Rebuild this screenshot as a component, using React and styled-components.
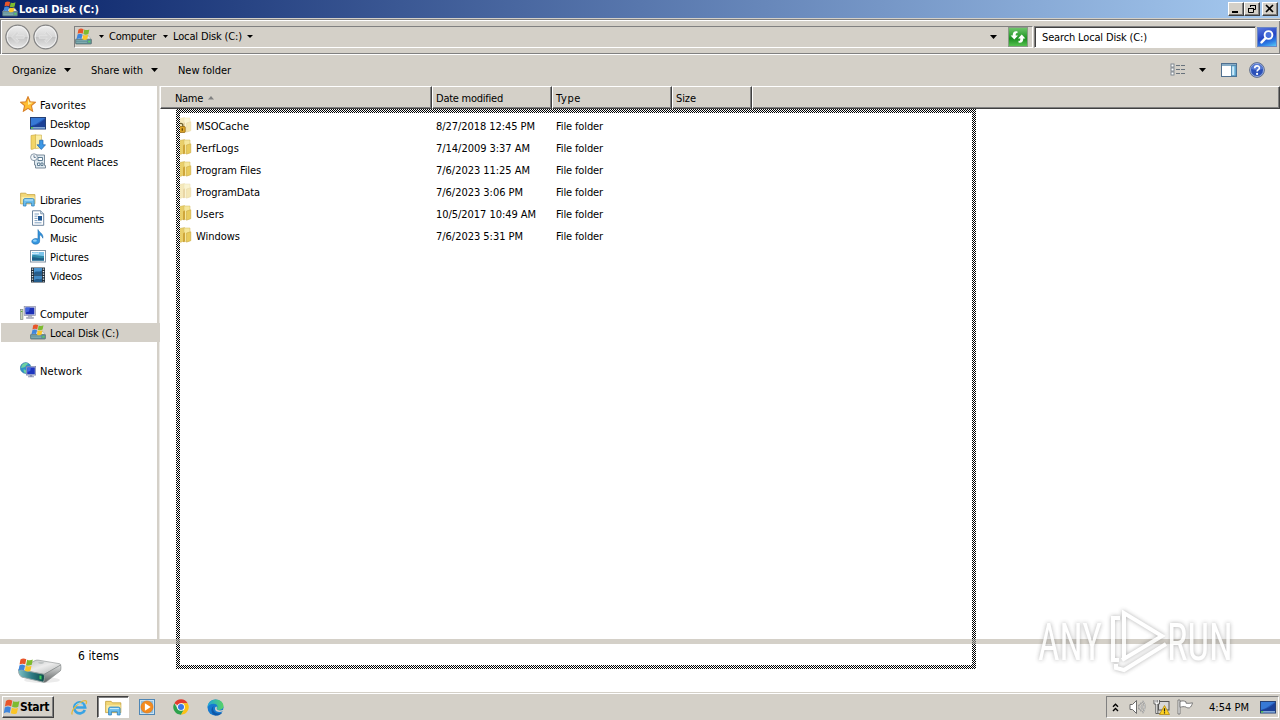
import React, { useLayoutEffect, useRef } from 'react';
import styled, { createGlobalStyle, css } from 'styled-components';

const FACE = '#d4d0c8';

const GlobalStyle = createGlobalStyle`
  html, body { margin: 0; padding: 0; background: #fff; overflow: hidden; }
  body {
    font-family: 'DejaVu Sans Condensed', 'DejaVu Sans', sans-serif;
    font-stretch: condensed;
    font-size: 11px;
    color: #000;
  }
  svg { display: block; flex: none; }
`;

/* ---------- text ---------- */
const Label = styled.span`
  display: inline-block;
  white-space: pre;
  flex: none;
  line-height: 14px;
  font-size: ${(p) => p.$size || 11}px;
  font-weight: ${(p) => (p.$bold ? 700 : 400)};
  color: ${(p) => p.$color || '#000'};
`;

/* Tracks the text so that it takes exactly the given width. */
function Text({ w, children, ...rest }) {
  const ref = useRef(null);
  useLayoutEffect(() => {
    const el = ref.current;
    el.style.letterSpacing = '0px';
    el.style.width = 'auto';
    const natural = el.getBoundingClientRect().width;
    el.style.letterSpacing = `${(w - natural) / el.textContent.length}px`;
    el.style.width = `${w}px`;
  }, [w, children]);
  return <Label ref={ref} {...rest}>{children}</Label>;
}

/* ---------- window ---------- */
const Screen = styled.div`
  position: relative;
  width: 1280px;
  height: 720px;
  display: flex;
  flex-direction: column;
  overflow: hidden;
  background: #fff;
`;

const TitleBar = styled.header`
  height: 18px;
  flex: none;
  display: flex;
  align-items: center;
  padding: 0 2px;
  gap: 1px;
  background: linear-gradient(90deg, #0a246a, #a6caf0);

  & > ${Label} { margin-top: 2px; }
`;

const CaptionButtons = styled.div`
  margin-left: auto;
  display: flex;
  align-items: center;
`;

const CaptionButton = styled.div`
  box-sizing: border-box;
  width: 16px;
  height: 14px;
  margin-left: ${(p) => (p.$gap ? 2 : 0)}px;
  display: flex;
  align-items: center;
  justify-content: center;
  background: ${FACE};
  border: 1px solid;
  border-color: #fff #404040 #404040 #fff;
  box-shadow: inset -1px -1px #808080;
`;

const AddressRow = styled.div`
  box-sizing: border-box;
  height: 37px;
  flex: none;
  display: flex;
  align-items: center;
  padding: 0 1px 0 5px;
  background: ${FACE};
  border-top: 1px solid #d4d0c8;
  border-bottom: 1px solid #fff;
  box-shadow: inset 0 1px #808080, inset 1px 0 #808080, inset 0 2px #fff, inset 2px 0 #fff,
    inset -1px 0 #808080, inset 0 -1px #808080;
`;

const AddressBox = styled.div`
  box-sizing: border-box;
  width: 959px;
  height: 22px;
  margin-left: 15px;
  display: flex;
  align-items: center;
  border: 1px solid;
  border-color: #808080 #fff #fff #808080;
`;

const Spacer = styled.span`
  flex: ${(p) => (p.$w ? `0 0 ${p.$w}px` : '1')};
`;

const RefreshButton = styled.div`
  box-sizing: border-box;
  width: 20px;
  height: 20px;
  border: 1px solid #8a9a86;
  background: linear-gradient(#6ec56a, #279a2b 50%, #1d8f22 60%, #55c24f);
  display: flex;
  align-items: center;
  justify-content: center;
`;

const SearchBox = styled.div`
  box-sizing: border-box;
  width: 222px;
  height: 22px;
  margin-left: 1px;
  padding-left: 7px;
  display: flex;
  align-items: center;
  background: #fff;
  border: 1px solid;
  border-color: #808080 #d4d0c8 #fff #808080;
  box-shadow: inset 1px 1px #404040;

  & > ${Label} { margin-top: 2px; }
`;

const SearchButton = styled.div`
  box-sizing: border-box;
  width: 20px;
  height: 20px;
  margin-left: 1px;
  display: flex;
  align-items: center;
  justify-content: center;
  border: 1px solid #6b86c4;
  background: linear-gradient(160deg, #5a78dc, #2444c4 50%, #2b7ae4 75%, #59c8f4);
`;

const CommandBar = styled.div`
  box-sizing: border-box;
  height: 31px;
  flex: none;
  display: flex;
  align-items: center;
  padding: 0 15px 1px 12px;
  background: ${FACE};

  & > ${Label} { margin-top: 2px; }
`;

const Body = styled.main`
  height: 553px;
  flex: none;
  display: flex;
`;

const NavPane = styled.nav`
  box-sizing: border-box;
  width: 160px;
  flex: none;
  padding-top: 9px;
  background: linear-gradient(90deg, #fff 157px, #d4d0c8 157px, #d4d0c8 159px, #eceae6 159px);
`;

const NavRow = styled.div`
  height: 19px;
  margin-left: 1px;
  padding-left: ${(p) => (p.$child ? 29 : 19)}px;
  display: flex;
  align-items: center;
  gap: 4px;
  ${(p) => p.$selected && css`background: ${FACE};`}

  & > svg { margin-bottom: 2px; }
  & > ${Label} { margin-top: 2px; }
`;

const FilePane = styled.section`
  flex: 1;
  display: flex;
  flex-direction: column;
`;

const HeaderRow = styled.div`
  display: flex;
  height: 23px;
  flex: none;
  background: ${FACE};
`;

const HeaderCell = styled.div`
  box-sizing: border-box;
  width: ${(p) => (p.$w ? `${p.$w}px` : 'auto')};
  flex: ${(p) => (p.$w ? 'none' : '1')};
  height: 23px;
  padding-left: ${(p) => p.$pad || 3}px;
  padding-top: 2px;
  display: flex;
  align-items: center;
  gap: 5px;
  border: 1px solid;
  border-color: #fff #404040 #404040 #fff;
  box-shadow: inset -1px -1px #808080;

  & > svg { margin-bottom: 2px; }
`;

const FileList = styled.div`
  padding-top: 6px;
`;

const FileRow = styled.div`
  height: 22px;
  display: flex;
  align-items: center;
  padding-left: 16px;

  ${Label} { margin-top: 2px; }
`;

const NameCell = styled.div`
  width: 260px;
  display: flex;
  align-items: center;
  gap: 4px;

  & > svg { margin-bottom: 2px; }
`;

const DateCell = styled.div`
  width: 120px;
`;

const Splitter = styled.div`
  height: 5px;
  flex: none;
  background: ${FACE};
`;

const Details = styled.footer`
  height: 48px;
  flex: none;
  display: flex;
  align-items: flex-start;
  padding-left: 17px;
`;

const DetailsText = styled.div`
  padding: 5px 0 0 15px;
`;

const DriveSlot = styled.div`
  padding-top: 9px;
`;

/* Halftone outline that floats above the window while it is being dragged;
   it loses contrast where it crosses the splitter. */
const DragFrame = styled.div`
  position: absolute;
  left: 176px;
  top: 109px;
  width: 800px;
  height: 560px;
  background:
    linear-gradient(rgba(160, 158, 150, 0.6), rgba(160, 158, 150, 0.6)) 0 530px / 100% 5px no-repeat,
    repeating-conic-gradient(#000 0 25%, #fff 0 50%) 0 0 / 2px 2px;
  clip-path: polygon(evenodd, 0 0, 100% 0, 100% 100%, 0 100%, 0 0,
    4px 4px, 4px calc(100% - 4px), calc(100% - 4px) calc(100% - 4px), calc(100% - 4px) 4px, 4px 4px);
`;

const Watermark = styled.svg`
  position: absolute;
  left: 1030px;
  top: 602px;
  overflow: visible;
  opacity: 0.85;
  filter: drop-shadow(0 0 2px rgba(70, 70, 70, 0.5));
`;

/* ---------- taskbar ---------- */
const Taskbar = styled.div`
  box-sizing: border-box;
  height: 28px;
  flex: none;
  display: flex;
  align-items: center;
  padding: 2px 1px 0 2px;
  background: ${FACE};
  box-shadow: inset 0 1px #d4d0c8, inset 0 2px #fff;
`;

const StartButton = styled.div`
  box-sizing: border-box;
  width: 52px;
  height: 22px;
  display: flex;
  align-items: center;
  border: 1px solid;
  border-color: #fff #404040 #404040 #fff;
  box-shadow: inset -1px -1px #808080;
`;

const TaskItem = styled.div`
  box-sizing: border-box;
  width: 32px;
  height: 22px;
  margin-right: 2px;
  display: flex;
  align-items: center;
  justify-content: center;
  ${(p) =>
    p.$active &&
    css`
      background: #fff;
      border: 1px solid;
      border-color: #404040 #fff #fff #404040;
      box-shadow: inset 1px 1px #808080;
    `}
`;

const Tray = styled.div`
  box-sizing: border-box;
  width: 173px;
  height: 22px;
  margin-left: auto;
  padding: 0 2px 0 5px;
  display: flex;
  align-items: center;
  border: 1px solid;
  border-color: #808080 #fff #fff #808080;

  & > ${Label} { margin-top: 2px; }
`;

/* ---------- icons ---------- */
const Flag = ({ x = 0, y = 0, s = 1 }) => (
  <g transform={`translate(${x} ${y}) scale(${s})`}>
    <path d="M1.5 1.2C3 0 4.6.2 6 1L5.2 5C3.8 4.2 2.4 4.2.8 5z" fill="#e8562a" />
    <path d="M6.6 1.3C8 2 9.6 2 11 1.2L10.2 5.2C8.6 6 7.2 6 5.8 5.3z" fill="#7dbb2f" />
    <path d="M.7 5.7C2.2 4.8 3.6 4.9 5 5.7L4.2 9.6C2.8 8.9 1.4 8.9 0 9.8z" fill="#3f86dc" />
    <path d="M5.7 6C7.1 6.7 8.6 6.7 10 5.9L9.2 9.8C7.8 10.7 6.3 10.5 4.9 9.9z" fill="#fbc526" />
  </g>
);

const DiskIcon = ({ size = 16 }) => (
  <svg width={size} height={size} viewBox="0 0 16 16">
    <path d="M.5 11L3 7.5h10l2.500 3.500z" fill="#e4e7e6" stroke="#9a9f9f" strokeWidth=".5" />
    <rect x=".5" y="10.5" width="15" height="4.6" rx=".8" fill="#5f8f98" stroke="#58696b" strokeWidth=".6" />
    <path d="M1.2 12h10M1.2 13.6h10" stroke="#a2c9c9" strokeWidth=".5" />
    <rect x="12.4" y="12" width="2" height="1.6" fill="#58d060" />
    <Flag x={1.6} y={0} s={1.08} />
  </svg>
);

const NavCircle = ({ flip }) => (
  <svg width="26" height="26" viewBox="0 0 26 26">
    <defs>
      <linearGradient id="nc" x1="0" y1="0" x2="0" y2="1">
        <stop offset="0" stopColor="#efefef" />
        <stop offset=".48" stopColor="#d6d6d6" />
        <stop offset=".52" stopColor="#c3c3c3" />
        <stop offset="1" stopColor="#e9e9e9" />
      </linearGradient>
    </defs>
    <circle cx="12.7" cy="13" r="11.8" fill="url(#nc)" stroke="#858585" strokeWidth="1.3" />
    <circle cx="12.7" cy="13" r="10.6" fill="none" stroke="#f4f4f4" strokeWidth=".9" />
    <path transform={flip ? 'translate(25.4 0) scale(-1 1)' : undefined}
      d="M6.5 13l5.5-5.5 1.7 1.7-2.5 2.5h8v2.6h-8l2.5 2.5-1.7 1.7z" fill="#d6d6d6" stroke="#e6e6e6" strokeWidth=".7" />
  </svg>
);

const Down = ({ w = 7 }) => (
  <svg width={w} height={w > 6 ? 4 : 3} viewBox="0 0 7 4" preserveAspectRatio="none"><path d="M0 0h7L3.5 4z" fill="#000" /></svg>
);

const StarIcon = () => (
  <svg width="16" height="16" viewBox="0 0 16 16">
    <path d="M8 .7l2.1 5 5.3.5-4 3.5 1.2 5.5L8 12.3l-4.6 2.9 1.2-5.5-4-3.5 5.3-.5z" fill="#ffbe32" stroke="#d9822b" strokeWidth="1.1" />
    <path d="M8 3l1.4 3.5 3.4.3L8 9z" fill="#fff0a4" />
  </svg>
);

const DesktopIcon = () => (
  <svg width="16" height="16" viewBox="0 0 16 16">
    <rect x=".5" y="2.5" width="15" height="11.5" fill="#2559b8" stroke="#274174" />
    <path d="M1 3h14L6 9 1 11z" fill="#3779d6" />
    <path d="M1 11c5 0 9-3 14-7v8H1z" fill="#1b4096" />
    <rect x="1" y="12" width="14" height="1.6" fill="#84a8d4" />
    <rect x="1" y="12" width="2.2" height="1.6" fill="#57bf55" />
  </svg>
);

const Folder = ({ faded, lock }) => (
  <svg width="16" height="16" viewBox="0 0 16 16">
    <g opacity={faded ? 0.45 : 1}>
      <path d="M3.500 1.500l5-.9v13l-3.500 1.600H3.500z" fill="#e9cf6a" stroke="#cfb04c" strokeWidth=".5" />
      <path d="M8 1h6v12.600l-6 1.200z" fill="#f6e79c" stroke="#d3b85c" strokeWidth=".5" />
      <path d="M7 6.500L9 5.300v9.200l-2 .8z" fill="#cfa63a" />
      <path d="M10.500 6l4.300-1.200v8.900l-4.300 1.500z" fill="#e8cb5c" stroke="#c8a642" strokeWidth=".5" />
    </g>
    {lock && (
      <g>
        <path d="M2.8 10V8.400a2 2 0 0 1 4 0V10" fill="none" stroke="#6e6230" strokeWidth="1.3" />
        <rect x="1" y="9.6" width="8.200" height="5.800" rx=".6" fill="#e0a92a" stroke="#8f6310" strokeWidth=".8" />
        <rect x="5.600" y="11.3" width="1.400" height="2.400" fill="#6a4808" />
      </g>
    )}
  </svg>
);

const DownloadsIcon = () => (
  <svg width="16" height="16" viewBox="0 0 16 16">
    <path d="M1 1.5l5-.8v13l-3.5 1.600H1z" fill="#f2d567" stroke="#c9a43a" strokeWidth=".6" />
    <path d="M5.5 1h6v12.7l-6 1z" fill="#fbeea6" stroke="#cdae48" strokeWidth=".6" />
    <path d="M9.6 6.2h3.400v4.600h2.500l-4.200 4.700L7 10.800h2.600z" fill="#3d98e6" stroke="#1c63ae" strokeWidth=".7" />
  </svg>
);

const RecentIcon = () => (
  <svg width="16" height="16" viewBox="0 0 16 16">
    <path d="M4.5 2h10v10.5h1V15H5.5V12h-1z" fill="#dfe9f0" stroke="#6d8090" strokeWidth=".9" />
    <path d="M8 4.5h4.5v3H8zM7.5 10h2.400v2.500H7.500zM11 10h2v2.500h-2z" fill="#fff" stroke="#4f7088" strokeWidth=".9" />
    <circle cx="4" cy="4.2" r="3.4" fill="#f5f8fa" stroke="#7f90a0" strokeWidth=".9" />
    <path d="M4 2.2v2.200h1.800" fill="none" stroke="#44607c" strokeWidth=".8" />
  </svg>
);

const LibrariesIcon = ({ size = 16 }) => (
  <svg width={size} height={size} viewBox="0 0 16 16">
    <path d="M.6 2.2h5.200l1.200 1.400h7.900v9.200H.6z" fill="#f3d877" stroke="#c4a23f" strokeWidth=".8" />
    <path d="M1.200 5.600h13.400v6.600H1.200z" fill="#fbeda4" stroke="#ead07c" strokeWidth=".5" />
    <path d="M3.400 15V9.200c0-1 .6-1.600 1.600-1.600h7.600c1 0 1.600.6 1.600 1.600V15h-2.600v-3H6v3z" fill="#6bbdec" stroke="#3182bd" strokeWidth=".8" />
    <path d="M4.600 9h8.400" stroke="#c9ecfb" strokeWidth="1" />
  </svg>
);

const DocumentsIcon = () => (
  <svg width="16" height="16" viewBox="0 0 16 16">
    <path d="M2.500.8h8.200l3 3v11.500H2.500z" fill="#fff" stroke="#5e7894" strokeWidth=".9" />
    <path d="M10.700.8v3h3" fill="#d4e2ef" stroke="#5e7894" strokeWidth=".7" />
    <path d="M4.500 4h4.500M4.500 6.200h3M4.500 8.400h3M4.500 10.600h3M4.500 12.800h7" stroke="#6f94b8" strokeWidth=".9" />
    <rect x="8" y="6" width="4" height="4.600" fill="#1f5793" />
  </svg>
);

const MusicIcon = () => (
  <svg width="16" height="16" viewBox="0 0 16 16">
    <path d="M8 .6c.5 2.800 5.600 3.600 4.800 8.600-.6-2-1.800-3-3.200-3.300v6.300c0 1.800-1.800 3-4 3-2.300 0-3.800-1.200-3.800-2.700 0-1.700 2-3 4.300-2.900.7 0 1.300.2 1.900.4z" fill="#3597e0" stroke="#1768ad" strokeWidth=".6" />
    <ellipse cx="4.900" cy="11.700" rx="2" ry="1.100" fill="#8fd0f8" />
  </svg>
);

const PicturesIcon = () => (
  <svg width="16" height="16" viewBox="0 0 16 16">
    <rect x=".5" y="2.500" width="15" height="11.500" fill="#fff" stroke="#8494a4" />
    <rect x="2" y="4" width="12" height="8.500" fill="#7cc4ea" />
    <path d="M2 7.500c4-1.500 8 1 12 .4v4.600H2z" fill="#2f8aa8" />
    <path d="M2 9.500c4-1 6 1.500 12 .5v2.500H2z" fill="#1d5f88" />
    <path d="M2 5.500c3-1 5 .5 7-.5" stroke="#e6f6fd" fill="none" />
  </svg>
);

const VideosIcon = () => (
  <svg width="16" height="16" viewBox="0 0 16 16">
    <rect x="1" y=".5" width="14" height="15" fill="#1f2c38" />
    <rect x="4" y="1" width="8" height="6.500" fill="#4a94cf" />
    <rect x="4" y="8.500" width="8" height="6.500" fill="#4189c4" />
    <path d="M4 6c2-3 4 0 8-2.500v4H4zM4 13.500c3-3 5 0 8-2V15H4z" fill="#245d8d" />
    <path d="M2.500 1.500v13M13.500 1.500v13" stroke="#e8eef2" strokeWidth="1.400" strokeDasharray="1.300 1.200" />
  </svg>
);

const ComputerIcon = () => (
  <svg width="16" height="16" viewBox="0 0 16 16">
    <rect x=".5" y="4.500" width="2.400" height="10" fill="#c9d3b8" stroke="#7d8a82" strokeWidth=".7" />
    <path d="M1 6.500h1.400" stroke="#5fae3a" />
    <rect x="4.200" y="1.500" width="11.300" height="9" fill="#d6d9e8" stroke="#8b8fa6" strokeWidth=".7" />
    <rect x="5.500" y="2.600" width="8.800" height="6.800" fill="#1b2fb6" />
    <path d="M5.500 2.600h4.500l-1 4-3.500 1z" fill="#3f62de" />
    <path d="M8.500 10.500h3v1.800h2v1.200H6.500v-1.200h2z" fill="#b2b6c6" stroke="#81869c" strokeWidth=".4" />
  </svg>
);

const NetworkIcon = () => (
  <svg width="16" height="16" viewBox="0 0 16 16">
    <circle cx="5.700" cy="6" r="5.400" fill="#2f8fc9" stroke="#1c6a94" strokeWidth=".5" />
    <path d="M2 3c2-2.400 4-2.200 6-1.600-.5 1.800-2 1.300-2.500 3C4 6 3 5 1 6zM3.500 7.500c2-.5 3 1 3 3l-1.500.500c-1-.5-1.500-2-1.500-3.500z" fill="#6dd0a0" />
    <rect x="6.300" y="4.500" width="9.400" height="8.600" fill="#c4cae0" stroke="#6f77a0" strokeWidth=".6" />
    <rect x="7.200" y="5.400" width="7.600" height="6.800" fill="#1e36c0" />
    <path d="M7.200 5.400h3.800l-.8 3.500-3 1z" fill="#4468e2" />
    <path d="M9.800 13h2.400v1.200h1.800v1.100H8v-1.100h1.800z" fill="#8a92b4" />
  </svg>
);

const DriveIcon = () => (
  <svg width="46" height="34" viewBox="0 0 46 34">
    <defs>
      <linearGradient id="dt" x1="0" y1="0" x2="1" y2="1">
        <stop offset="0" stopColor="#b4b8b8" /><stop offset=".5" stopColor="#ececec" /><stop offset="1" stopColor="#b0b3b3" />
      </linearGradient>
      <linearGradient id="df" x1="0" y1="0" x2="1" y2="0">
        <stop offset="0" stopColor="#7cc0c4" /><stop offset=".5" stopColor="#2f7c86" /><stop offset="1" stopColor="#0b4a48" />
      </linearGradient>
      <linearGradient id="ds" x1="0" y1="0" x2="0" y2="1">
        <stop offset="0" stopColor="#e0e1e1" /><stop offset="1" stopColor="#5f6464" />
      </linearGradient>
    </defs>
    <ellipse cx="25" cy="27" rx="18" ry="3" fill="#000" opacity=".08" />
    <path d="M2 16.500L18 7.600c1-.5 2-.6 3-.5l21 3.500c1.500.3 2 1 1.500 1.800L27 21.500z" fill="url(#dt)" stroke="#8d9292" strokeWidth=".6" />
    <path d="M27 21.500L43.600 12c.6 2 .4 4.300-.2 5.800L29.500 28.600c-1 .6-2 .8-3 .6z" fill="url(#ds)" stroke="#757a7a" strokeWidth=".6" />
    <path d="M1.600 16.300L27 21.300c.8 2.500.5 5.300-.6 7.900L4.500 24C2 22 1.200 19 1.600 16.300z" fill="url(#df)" stroke="#9aa4a4" strokeWidth=".9" />
    <path d="M22.500 22.400l2 .4v3.600l-2-.4z" fill="#3ccf5c" />
    <ellipse cx="24" cy="9.800" rx="3" ry="1.100" fill="#bfc3c3" />
    <Flag x={1.500} y={5} s={1.300} />
  </svg>
);

const ViewIcon = () => (
  <svg width="16" height="14" viewBox="0 0 16 14">
    {[0.5, 4.5, 8.5].map((y) => (
      <g key={y}>
        <rect x="1" y={y + 0.5} width="3" height="3" fill="#fff" stroke="#77808a" strokeWidth=".9" />
        <path d={`M6 ${y + 2}h4M11 ${y + 2}h4`} stroke="#68727c" />
      </g>
    ))}
  </svg>
);

const PreviewIcon = () => (
  <svg width="16" height="14" viewBox="0 0 16 14">
    <rect x=".5" y=".5" width="15" height="13" fill="#fff" stroke="#4f6f8f" />
    <path d="M1 2h14" stroke="#5489ae" strokeWidth="1.400" />
    <rect x="10.500" y="2.700" width="4.500" height="10.300" fill="#7fc2e4" stroke="#447ea6" strokeWidth=".8" />
    <path d="M11.200 3.500h1.800v8.500h-1.800z" fill="#cdeafa" />
  </svg>
);

const HelpIcon = () => (
  <svg width="16" height="16" viewBox="0 0 16 16">
    <circle cx="8" cy="8" r="7.400" fill="#2b50b8" stroke="#69778f" strokeWidth="1" />
    <circle cx="8" cy="8" r="6.500" fill="none" stroke="#b4c4e8" strokeWidth=".8" />
    <path d="M2.500 7a5.500 5 0 0 1 11 0c-4 1.500-7 1.500-11 0z" fill="#6b8be0" opacity=".7" />
    <path d="M5.700 6.200c0-3 4.700-3 4.700-.3 0 1.800-2.300 1.700-2.300 3.700" fill="none" stroke="#fff" strokeWidth="1.600" />
    <circle cx="8.100" cy="11.900" r="1.100" fill="#fff" />
  </svg>
);

const RefreshIcon = () => (
  <svg width="16" height="14" viewBox="0 0 16 14">
    <path d="M7.500 3.200C6 2.700 5.600 4 5.700 5.500H8L4.300 9.500.6 5.500H2.700C2.600 2 5 .6 7.500 1.600z" fill="#fff" />
    <path d="M8.500 10.800c1.500.5 1.900-.8 1.800-2.300H8L11.700 4.500l3.700 4h-2.100c.1 3.500-2.300 4.900-4.800 3.900z" fill="#fff" />
  </svg>
);

const SearchIcon = () => (
  <svg width="16" height="16" viewBox="0 0 16 16">
    <circle cx="9.500" cy="6" r="3.900" fill="#4a70dc" stroke="#fff" strokeWidth="1.900" />
    <path d="M6.600 9.200L2.500 13.300" stroke="#fff" strokeWidth="2.500" strokeLinecap="round" />
  </svg>
);

const StartFlag = () => (
  <svg width="17" height="16" viewBox="0 0 17 16"><Flag x={0.800} y={0.300} s={1.420} /></svg>
);

const IEIcon = () => (
  <svg width="17" height="17" viewBox="0 0 17 17">
    <path d="M13.800 11A5.500 5.500 0 1 1 14.200 8.500H5" fill="none" stroke="#38a3e4" strokeWidth="2.700" />
    <path d="M1.300 15.500C-.8 12.500 6 4.300 12 2c3.500-1.300 4.200.4 3 3" fill="none" stroke="#e5b93c" strokeWidth="1.300" />
    <path d="M4.500 6.500a5 4.600 0 0 1 7.500-1" fill="none" stroke="#9bdcf9" strokeWidth=".9" />
  </svg>
);

const MediaIcon = () => (
  <svg width="16" height="16" viewBox="0 0 16 16">
    <rect x=".5" y=".5" width="15" height="15" fill="#c9e2f3" stroke="#4e86b5" />
    <path d="M2 2h12v12H2z" fill="#8fbfe0" />
    <circle cx="8" cy="8" r="6.100" fill="#f48a1d" stroke="#d96d0c" strokeWidth=".5" />
    <path d="M5.900 4.300L11.700 8l-5.800 3.700z" fill="#fff" />
  </svg>
);

const ChromeIcon = () => (
  <svg width="16" height="16" viewBox="0 0 16 16">
    <path d="M8 8L1.330 4.150A7.700 7.700 0 0 1 14.670 4.150H8z" fill="#e33b2e" />
    <path d="M1.330 4.150A7.700 7.700 0 0 0 8 15.700l3.330-5.780L8 8 4.670 9.920z" fill="#2da24c" />
    <path d="M8 4.150h6.670A7.700 7.700 0 0 1 8 15.700l3.330-5.780z" fill="#fbc116" />
    <circle cx="8" cy="8" r="3.850" fill="#fff" />
    <circle cx="8" cy="8" r="3" fill="#3b78e7" />
  </svg>
);

const EdgeIcon = () => (
  <svg width="17" height="17" viewBox="0 0 17 17">
    <defs>
      <linearGradient id="eg" x1="0" y1="0" x2="1" y2="0">
        <stop offset="0" stopColor="#1fa5dc" /><stop offset="1" stopColor="#58d365" />
      </linearGradient>
    </defs>
    <circle cx="8.500" cy="8.500" r="8" fill="#1779cf" />
    <path d="M.5 8.500C.5 3.500 4.500.5 8.700.5c4.800 0 7.800 3.300 7.800 6.500 0 2.300-1.700 3.900-4 3.900-1.700 0-2.700-.7-2.700-1.500 0-.6.700-.9.700-1.900 0-1.500-1.600-2.700-3.800-2.700C3.700 4.800 1.300 6.300.5 8.500z" fill="url(#eg)" />
    <path d="M6.800 7C5 9.500 6.500 14.500 12 14.500c1.200 0 2.200-.2 3.200-.8-1.500 2.200-4.500 3.200-7 2.700C4 15.500 3 9 6.800 7z" fill="#0f58a8" />
    <path d="M9.700 9.200c-.3 1.900 3 3 6.800 1.500l-.7 1.600c-3 1.500-7.800.7-7.800-2.600 0-1 .4-1.700 1.200-2.100.7.300.9.900.5 1.600z" fill="#d4d0c8" />
  </svg>
);

const Chevrons = () => (
  <svg width="7" height="9" viewBox="0 0 7 9">
    <path d="M1 3.700L3.500 1.200 6 3.700M1 7.900l2.500-2.500L6 7.900" fill="none" stroke="#000" strokeWidth="1.400" />
  </svg>
);

const SpeakerIcon = () => (
  <svg width="17" height="16" viewBox="0 0 17 16">
    <path d="M1 5.500h2.500L7.500 1.500v13l-4-4H1z" fill="#fff" stroke="#6b6b6b" strokeWidth="1" />
    <path d="M9.500 5.500c1.200 1.500 1.200 3.500 0 5M11.500 3.800c2.200 2.500 2.200 6 0 8.400M13.500 2c3 3.500 3 8.500 0 12" fill="none" stroke="#707070" strokeWidth="1.500" />
    <path d="M9.500 5.500c1.200 1.500 1.200 3.500 0 5M11.500 3.800c2.200 2.500 2.200 6 0 8.400M13.500 2c3 3.500 3 8.500 0 12" fill="none" stroke="#fff" strokeWidth=".7" />
  </svg>
);

const TrayNetIcon = () => (
  <svg width="17" height="16" viewBox="0 0 17 16">
    <rect x="5.500" y="2.500" width="10.500" height="8.500" fill="#d8d8d8" stroke="#555" />
    <path d="M1 1v4h1.800v9.500h2V5h1.700V1" fill="#fff" stroke="#555" strokeWidth=".9" />
    <path d="M3 1v2.500M4.700 1v2.500M4.500 14.500h4" stroke="#555" strokeWidth=".8" />
    <path d="M11.500 6.500l5 9h-10z" fill="#ffd321" stroke="#b48a12" strokeWidth=".8" />
    <path d="M11.500 9.300v3.200M11.500 13.300v1.200" stroke="#222" strokeWidth="1.200" />
  </svg>
);

const TrayFlagIcon = () => (
  <svg width="17" height="16" viewBox="0 0 17 16">
    <path d="M1 1h2v14H1z" fill="#fff" stroke="#707070" strokeWidth=".9" />
    <path d="M3 2.500c2.500-1 4-.7 6 .3v1.400c2 .3 4 .2 6.500-.4-.5 2.200-1.500 4.200-3 5-2 .3-3-.2-3.500-.8-2-.6-4-.4-6 .3z" fill="#fff" stroke="#707070" strokeWidth=".9" />
  </svg>
);

/* ---------- data ---------- */
const NAV = [
  { label: 'Favorites', w: 46, icon: StarIcon },
  { label: 'Desktop', w: 40, icon: DesktopIcon, child: true },
  { label: 'Downloads', w: 53, icon: DownloadsIcon, child: true },
  { label: 'Recent Places', w: 68, icon: RecentIcon, child: true },
  null,
  { label: 'Libraries', w: 41, icon: LibrariesIcon },
  { label: 'Documents', w: 54, icon: DocumentsIcon, child: true },
  { label: 'Music', w: 27, icon: MusicIcon, child: true },
  { label: 'Pictures', w: 39, icon: PicturesIcon, child: true },
  { label: 'Videos', w: 32, icon: VideosIcon, child: true },
  null,
  { label: 'Computer', w: 48, icon: ComputerIcon },
  { label: 'Local Disk (C:)', w: 69, icon: DiskIcon, child: true, selected: true },
  null,
  { label: 'Network', w: 42, icon: NetworkIcon },
];

const FILES = [
  { name: 'MSOCache', w: 53, date: '8/27/2018 12:45 PM', dw: 99, faded: true, lock: true },
  { name: 'PerfLogs', w: 43, date: '7/14/2009 3:37 AM', dw: 94 },
  { name: 'Program Files', w: 65, date: '7/6/2023 11:25 AM', dw: 94 },
  { name: 'ProgramData', w: 64, date: '7/6/2023 3:06 PM', dw: 87, faded: true },
  { name: 'Users', w: 28, date: '10/5/2017 10:49 AM', dw: 100 },
  { name: 'Windows', w: 44, date: '7/6/2023 5:31 PM', dw: 87 },
];

export default function App() {
  return (
    <Screen>
      <GlobalStyle />
      <TitleBar>
        <DiskIcon />
        <Text w={80} $bold $color="#fff">Local Disk (C:)</Text>
        <CaptionButtons>
          <CaptionButton>
            <svg width="12" height="10"><path d="M2 7h6v2H2z" /></svg>
          </CaptionButton>
          <CaptionButton>
            <svg width="12" height="10">
              <path d="M4.500 3V1.500h5v4H8M4 1.500h6M2.500 4.500h5v4h-5zM2 4.500h6" fill="none" stroke="#000" />
            </svg>
          </CaptionButton>
          <CaptionButton $gap>
            <svg width="12" height="10"><path d="M2 1l7 7M9 1L2 8" stroke="#000" strokeWidth="1.600" /></svg>
          </CaptionButton>
        </CaptionButtons>
      </TitleBar>

      <AddressRow>
        <NavCircle />
        <Spacer $w={2} />
        <NavCircle flip />
        <AddressBox>
          <DiskIcon size={17} />
          <Spacer $w={7} />
          <Down w={5} />
          <Spacer $w={5} />
          <Text w={47}>Computer</Text>
          <Spacer $w={7} />
          <Down w={5} />
          <Spacer $w={5} />
          <Text w={69}>Local Disk (C:)</Text>
          <Spacer $w={5} />
          <Down w={6} />
          <Spacer />
          <Down />
          <Spacer $w={11} />
          <RefreshButton><RefreshIcon /></RefreshButton>
          <Spacer $w={4} />
        </AddressBox>
        <SearchBox><Text w={105}>Search Local Disk (C:)</Text></SearchBox>
        <SearchButton><SearchIcon /></SearchButton>
      </AddressRow>

      <CommandBar>
        <Text w={44}>Organize</Text>
        <Spacer $w={8} />
        <Down />
        <Spacer $w={20} />
        <Text w={52}>Share with</Text>
        <Spacer $w={8} />
        <Down />
        <Spacer $w={20} />
        <Text w={53}>New folder</Text>
        <Spacer />
        <ViewIcon />
        <Spacer $w={13} />
        <Down />
        <Spacer $w={15} />
        <PreviewIcon />
        <Spacer $w={12} />
        <HelpIcon />
      </CommandBar>

      <Body>
        <NavPane>
          {NAV.map((n, i) =>
            n ? (
              <NavRow key={i} $child={n.child} $selected={n.selected}>
                <n.icon />
                <Text w={n.w}>{n.label}</Text>
              </NavRow>
            ) : (
              <NavRow key={i} />
            )
          )}
        </NavPane>
        <FilePane>
          <HeaderRow>
            <HeaderCell $w={272} $pad={14}>
              <Text w={28}>Name</Text>
              <svg width="6" height="6"><path d="M0 4.500h6L3 1z" fill="#808080" /></svg>
            </HeaderCell>
            <HeaderCell $w={120}><Text w={67}>Date modified</Text></HeaderCell>
            <HeaderCell $w={120}><Text w={25}>Type</Text></HeaderCell>
            <HeaderCell $w={80}><Text w={20}>Size</Text></HeaderCell>
            <HeaderCell />
          </HeaderRow>
          <FileList>
            {FILES.map((f) => (
              <FileRow key={f.name}>
                <NameCell>
                  <Folder faded={f.faded} lock={f.lock} />
                  <Text w={f.w}>{f.name}</Text>
                </NameCell>
                <DateCell><Text w={f.dw}>{f.date}</Text></DateCell>
                <Text w={47}>File folder</Text>
              </FileRow>
            ))}
          </FileList>
        </FilePane>
      </Body>

      <Splitter />
      <Details>
        <DriveSlot><DriveIcon /></DriveSlot>
        <DetailsText><Text w={41} $size={12}>6 items</Text></DetailsText>
      </Details>

      <Taskbar>
        <StartButton>
          <StartFlag />
          <Text w={29} $size={12} $bold>Start</Text>
        </StartButton>
        <Spacer $w={9} />
        <TaskItem><IEIcon /></TaskItem>
        <TaskItem $active><LibrariesIcon size={17} /></TaskItem>
        <TaskItem><MediaIcon /></TaskItem>
        <TaskItem><ChromeIcon /></TaskItem>
        <TaskItem><EdgeIcon /></TaskItem>
        <Tray>
          <Chevrons />
          <Spacer $w={10} />
          <SpeakerIcon />
          <Spacer $w={7} />
          <TrayNetIcon />
          <Spacer $w={7} />
          <TrayFlagIcon />
          <Spacer $w={15} />
          <Text w={40}>4:54 PM</Text>
          <Spacer />
          <DesktopIcon />
        </Tray>
      </Taskbar>

      <DragFrame />

      <Watermark width="250" height="76" viewBox="0 0 250 76">
        <g fill="#fff" fontFamily="Roboto, sans-serif" fontSize="52">
          <text transform="translate(8 58) scale(.72 1)">ANY</text>
          <text transform="translate(137 58) scale(.74 1)">RUN</text>
        </g>
        <g fill="none" stroke="#fff" strokeWidth="4">
          <path d="M94 58V11L132 34 92 58" />
          <path d="M90 16h-7v42h6" />
          <path d="M86 62v4l8 2L136 42" />
        </g>
      </Watermark>
    </Screen>
  );
}
